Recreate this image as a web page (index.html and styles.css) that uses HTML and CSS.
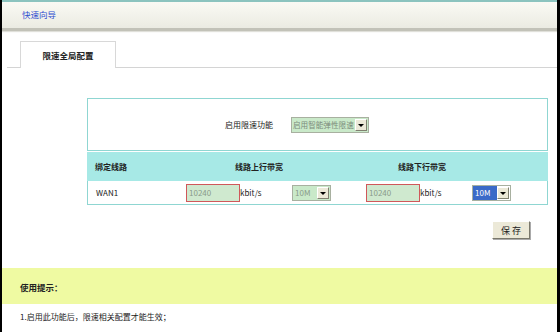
FILE: index.html
```html
<!DOCTYPE html>
<html lang="zh-CN">
<head>
	<meta charset="UTF-8">
	<title>限速全局配置</title>
	<link rel="stylesheet" href="styles.css">
</head>
<body>
	<div class="frame">
		<div class="topbar"><a class="guide" href="#">快速向导</a></div>
		<div class="tabs">
			<span class="tab_line_l"></span>
			<div class="tab on">限速全局配置</div>
			<span class="tab_line_r"></span>
		</div>
		<div class="conf">
			<div class="conf_row conf_enable">
				<span class="lbl">启用限速功能</span>
				<span class="sel sel_wide"><span class="sel_txt">启用智能弹性限速</span><i class="sel_btn"></i></span>
			</div>
			<div class="conf_head">
				<span class="c1">绑定线路</span>
				<span class="c2">线路上行带宽</span>
				<span class="c3">线路下行带宽</span>
			</div>
			<div class="conf_row conf_line">
				<span class="c1">WAN1</span>
				<span class="c2 cell">
					<span class="ipt">10240</span><span class="unit">kbit/s</span>
					<span class="sel"><span class="sel_txt">10M</span><i class="sel_btn"></i></span>
				</span>
				<span class="c3 cell">
					<span class="ipt">10240</span><span class="unit">kbit/s</span>
					<span class="sel sel_on"><span class="sel_txt">10M</span><i class="sel_btn"></i></span>
				</span>
			</div>
		</div>
		<div class="btn_row"><button class="save">保 存</button></div>
		<div class="tips">使用提示：</div>
		<div class="tip_item">1.启用此功能后，限速相关配置才能生效；</div>
	</div>
</body>
</html>
```

FILE: styles.css
```css
*{box-sizing:border-box;}
html,body{margin:0;padding:0;}
body{width:560px;height:332px;overflow:hidden;background:#fff;font-family:"Noto Sans CJK SC","Liberation Sans",sans-serif;font-size:8px;color:#222;}
.frame{height:332px;border-left:2px solid #000;border-right:3px solid #000;overflow:hidden;}
.topbar{height:31px;border-top:2px solid #8cc4bf;background:linear-gradient(#fafaf4,#ebebe2);border-bottom:3px solid #c2c2b8;box-shadow:0 1px 1px #e0e0da;padding-left:20px;line-height:24px;}
.guide{color:#2f4fd0;text-decoration:none;font-size:8.5px;}
.tabs{display:flex;align-items:flex-end;margin-top:10px;height:27px;}
.tab_line_l{width:13px;border-bottom:1px solid #d4d4d4;margin-left:5px;}
.tab_line_r{flex:1;border-bottom:1px solid #d4d4d4;}
.tab{width:96px;height:27px;border:1px solid #d8d8d8;border-bottom:none;line-height:26px;text-align:center;font-weight:bold;font-size:8.5px;}
.conf{margin:30px 0 0 85px;width:461px;}
.conf_row{border:1px solid #8fd6d2;display:flex;align-items:center;}
.conf_enable{height:53px;padding-left:137px;gap:18px;}
.conf_head{display:flex;align-items:center;height:29px;margin-top:1px;background:#a7e9e6;font-weight:bold;}
.conf_line{height:24px;border-top:none;}
.c1{width:98px;padding-left:8px;font-weight:bold;}
.c2{width:180px;}
.c3{flex:1;}
.conf_head .c2{padding-left:50px;}
.conf_head .c3{padding-left:33px;}
.cell{display:flex;align-items:center;}
.conf_line .c1{font-weight:normal;}
.ipt{width:54px;height:18px;border:1px solid #d0585a;background:#cfe9cf;color:#8a9a8a;line-height:16px;padding-left:2px;}
.unit{width:52px;}
.sel{display:inline-flex;align-items:center;height:16px;border:1px solid #a8b0a0;background:#c9e9c9;color:#8a9a8a;white-space:nowrap;}
.sel .sel_txt{padding:0 2px;line-height:14px;}
.sel_wide .sel_txt{width:63px;font-size:7.6px;padding:0 1px;}
.conf_line .sel .sel_txt{width:24px;}
.sel_btn{width:12px;height:12px;margin-right:1px;background:#ece9d8;border:1px solid #fff;border-right-color:#808070;border-bottom-color:#808070;position:relative;}
.sel_btn:after{content:"";position:absolute;left:2px;top:4px;border-left:3px solid transparent;border-right:3px solid transparent;border-top:3px solid #000;}
.sel_wide{color:#7c8c7c;}
.sel_on{background:#fff;}
.sel_on .sel_txt{background:#3a6ac8;color:#fff;}
.btn_row{display:flex;justify-content:flex-end;margin:16px 27px 0 0;}
.save{width:38px;height:18px;padding:0;font-family:inherit;font-size:9px;background:#ece9d8;border:1px solid #fff;border-right-color:#7a786c;border-bottom-color:#7a786c;box-shadow:1px 1px 0 #aaa;color:#222;}
.tips{margin-top:29px;height:36px;background:#effaa2;font-weight:bold;padding:13px 0 0 18px;font-size:8.5px;}
.tip_item{padding:7px 0 0 18px;}
```
